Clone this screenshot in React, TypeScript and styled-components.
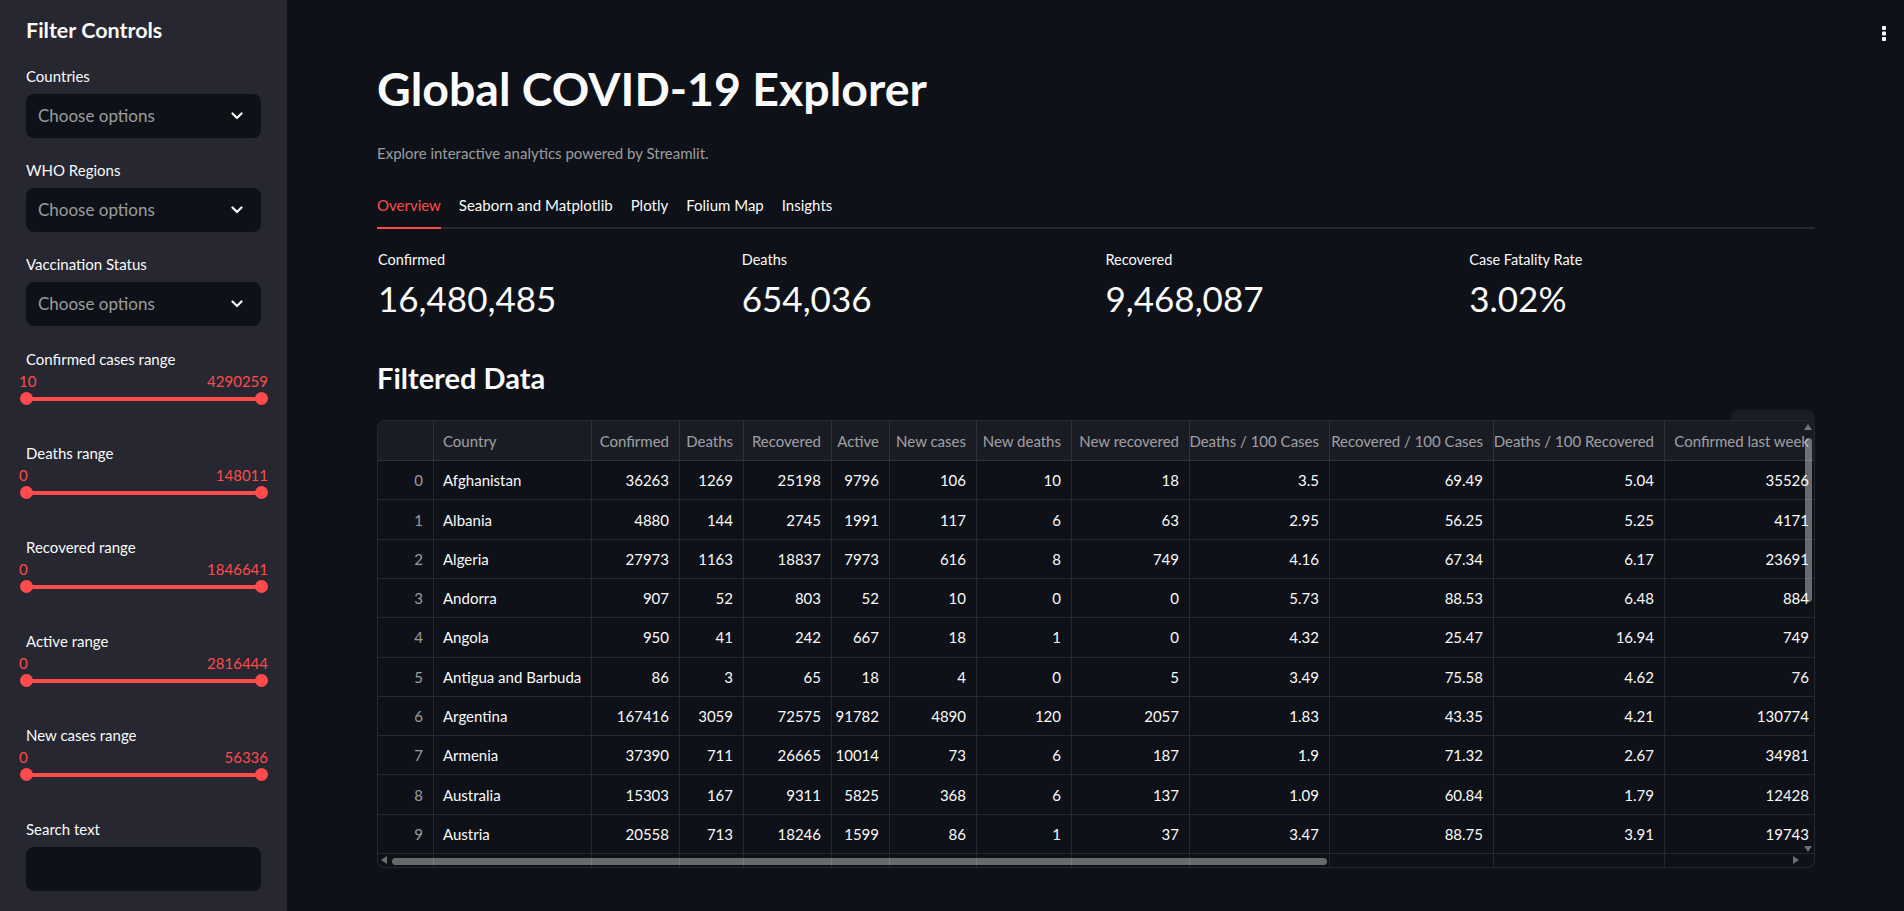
import React from "react";
import styled, { createGlobalStyle } from "styled-components";

const GlobalStyle = createGlobalStyle`
    html, body {
        margin: 0;
        padding: 0;
        background-color: #0e1117;
        color: #fafafa;
        font-family: Lato, "Noto Sans", sans-serif;
    }
    * {
        box-sizing: border-box;
    }
`;

const Page = styled.div`
    position: relative;
    display: flex;
    width: 100%;
    height: 100vh;
    overflow: hidden;
`;

/* ---------- sidebar ---------- */

const Sidebar = styled.aside`
    display: flex;
    flex: 0 0 287px;
    flex-direction: column;
    padding: 18px 26px 0 26px;
    background-color: #262730;
`;

const SidebarTitle = styled.h2`
    margin: 0 0 22px;
    font-size: 21.5px;
    font-weight: 700;
    line-height: 1.2;
`;

const Field = styled.div<{ $gap: number }>`
    display: flex;
    flex-direction: column;
    margin-bottom: ${(p) => p.$gap}px;
`;

const FieldLabel = styled.label`
    font-size: 15px;
    line-height: 20px;
    color: #fafafa;
`;

const Select = styled.div`
    display: flex;
    height: 44px;
    margin-top: 8px;
    padding: 0 18px 0 12px;
    align-items: center;
    justify-content: space-between;
    border-radius: 8px;
    background-color: #0e1117;
    font-size: 17px;
    color: rgba(250, 250, 250, 0.6);
`;

const TextInput = styled.div`
    height: 44px;
    margin-top: 8px;
    border-radius: 8px;
    background-color: #0e1117;
`;

const SliderBox = styled.div`
    margin: 4px -7px 0;
`;

const SliderValues = styled.div`
    display: flex;
    justify-content: space-between;
    font-size: 15px;
    line-height: 16px;
    color: #ff4b4b;
`;

const SliderTrack = styled.div`
    position: relative;
    height: 13px;
    margin: 3.5px 7px 0;
    &::before {
        content: "";
        position: absolute;
        left: 0;
        right: 0;
        top: 4.5px;
        height: 4px;
        border-radius: 2px;
        background-color: #ff4b4b;
    }
`;

const Thumb = styled.span<{ $side: "left" | "right" }>`
    position: absolute;
    top: 0;
    ${(p) => (p.$side === "left" ? "left: -6.5px;" : "right: -6.5px;")}
    width: 13px;
    height: 13px;
    border-radius: 50%;
    background-color: #ff4b4b;
`;

/* ---------- main ---------- */

const Main = styled.main`
    flex: 1;
    min-width: 0;
    padding: 61px 89px 0 90px;
`;

const Title = styled.h1`
    margin: 0;
    font-size: 46.5px;
    font-weight: 700;
    line-height: 1.2;
`;

const Caption = styled.p`
    margin: 26px 0 0;
    font-size: 15px;
    line-height: 20px;
    color: rgba(250, 250, 250, 0.6);
`;

const TabList = styled.div`
    display: flex;
    margin-top: 20px;
    gap: 18px;
    border-bottom: 2px solid #262730;
`;

const Tab = styled.div<{ $active?: boolean }>`
    position: relative;
    display: flex;
    height: 44px;
    align-items: center;
    font-size: 15px;
    color: ${(p) => (p.$active ? "#ff4b4b" : "#fafafa")};
    &::after {
        content: "";
        display: ${(p) => (p.$active ? "block" : "none")};
        position: absolute;
        left: 0;
        right: 0;
        bottom: -2px;
        height: 2px;
        background-color: #ff4b4b;
    }
`;

const Metrics = styled.div`
    display: grid;
    margin-top: 21.5px;
    padding-left: 1px;
    grid-template-columns: repeat(4, 1fr);
    gap: 18px;
`;

const MetricLabel = styled.div`
    font-size: 14.5px;
    line-height: 20px;
`;

const MetricValue = styled.div`
    margin-top: 7px;
    font-size: 35px;
    line-height: 1.2;
`;

const SectionTitle = styled.h3`
    margin: 42px 0 0;
    font-size: 29px;
    font-weight: 700;
    line-height: 1.2;
`;

const TableArea = styled.div`
    position: relative;
    margin-top: 24px;
`;

const ToolbarGhost = styled.div`
    position: absolute;
    top: -10px;
    right: 0;
    width: 84px;
    height: 30px;
    border-radius: 8px;
    background-color: #1a1c24;
`;

const TableFrame = styled.div`
    position: relative;
    height: 448px;
    overflow: hidden;
    border: 1px solid rgba(250, 250, 250, 0.1);
    border-radius: 8px;
    background-color: #0e1117;
`;

const COLS = "56px 158px 88px 64px 88px 58px 87px 95px 118px 140px 164px 171px 155px";

const Row = styled.div<{ $header?: boolean }>`
    display: grid;
    width: 1442px;
    height: ${(p) => (p.$header ? "40px" : "39.3px")};
    grid-template-columns: ${COLS};
    border-bottom: 1px solid rgba(250, 250, 250, 0.1);
    background-color: ${(p) => (p.$header ? "#1a1c24" : "transparent")};
`;

const Cell = styled.div<{ $align: "left" | "right"; $muted?: boolean }>`
    display: flex;
    padding: 0 10px 0 9px;
    align-items: center;
    justify-content: ${(p) => (p.$align === "left" ? "flex-start" : "flex-end")};
    overflow: hidden;
    border-right: 1px solid rgba(250, 250, 250, 0.1);
    white-space: nowrap;
    font-size: 15px;
    color: ${(p) => (p.$muted ? "rgba(250, 250, 250, 0.6)" : "#fafafa")};
`;

const VThumb = styled.div`
    position: absolute;
    top: 17px;
    right: 2px;
    width: 7px;
    height: 164px;
    border-radius: 4px;
    background-color: rgba(250, 250, 250, 0.38);
`;

const HThumb = styled.div`
    position: absolute;
    left: 14px;
    bottom: 2px;
    width: 935px;
    height: 7px;
    border-radius: 4px;
    background-color: rgba(250, 250, 250, 0.38);
`;

const Arrow = styled.svg<{ $pos: string }>`
    position: absolute;
    ${(p) => p.$pos}
    fill: rgba(250, 250, 250, 0.4);
`;

const MenuButton = styled.svg`
    position: absolute;
    top: 24px;
    right: 17px;
`;

const headers = [
    "",
    "Country",
    "Confirmed",
    "Deaths",
    "Recovered",
    "Active",
    "New cases",
    "New deaths",
    "New recovered",
    "Deaths / 100 Cases",
    "Recovered / 100 Cases",
    "Deaths / 100 Recovered",
    "Confirmed last week",
];

const rows: (string | number)[][] = [
    ["Afghanistan", 36263, 1269, 25198, 9796, 106, 10, 18, "3.5", "69.49", "5.04", 35526],
    ["Albania", 4880, 144, 2745, 1991, 117, 6, 63, "2.95", "56.25", "5.25", 4171],
    ["Algeria", 27973, 1163, 18837, 7973, 616, 8, 749, "4.16", "67.34", "6.17", 23691],
    ["Andorra", 907, 52, 803, 52, 10, 0, 0, "5.73", "88.53", "6.48", 884],
    ["Angola", 950, 41, 242, 667, 18, 1, 0, "4.32", "25.47", "16.94", 749],
    ["Antigua and Barbuda", 86, 3, 65, 18, 4, 0, 5, "3.49", "75.58", "4.62", 76],
    ["Argentina", 167416, 3059, 72575, 91782, 4890, 120, 2057, "1.83", "43.35", "4.21", 130774],
    ["Armenia", 37390, 711, 26665, 10014, 73, 6, 187, "1.9", "71.32", "2.67", 34981],
    ["Australia", 15303, 167, 9311, 5825, 368, 6, 137, "1.09", "60.84", "1.79", 12428],
    ["Austria", 20558, 713, 18246, 1599, 86, 1, 37, "3.47", "88.75", "3.91", 19743],
    ["Azerbaijan", 30446, 423, 23242, 6781, 396, 6, 558, "1.39", "76.34", "1.82", 27890],
];

const selects = ["Countries", "WHO Regions", "Vaccination Status"];

const ranges = [
    { label: "Confirmed cases range", min: 10, max: 4290259 },
    { label: "Deaths range", min: 0, max: 148011 },
    { label: "Recovered range", min: 0, max: 1846641 },
    { label: "Active range", min: 0, max: 2816444 },
    { label: "New cases range", min: 0, max: 56336 },
];

const tabs = ["Overview", "Seaborn and Matplotlib", "Plotly", "Folium Map", "Insights"];

const metrics = [
    { label: "Confirmed", value: "16,480,485" },
    { label: "Deaths", value: "654,036" },
    { label: "Recovered", value: "9,468,087" },
    { label: "Case Fatality Rate", value: "3.02%" },
];

const Chevron = () => (
    <svg width="12" height="8" viewBox="0 0 12 8">
        <polyline points="1.5,1.5 6,6 10.5,1.5" fill="none" stroke="#fafafa" strokeWidth="2.2" strokeLinecap="round" strokeLinejoin="round" />
    </svg>
);

export default function App() {
    return (
        <>
            <GlobalStyle />
            <Page>
                <Sidebar>
                    <SidebarTitle>Filter Controls</SidebarTitle>
                    {selects.map((s, i) => (
                        <Field key={s} $gap={i === selects.length - 1 ? 23 : 22}>
                            <FieldLabel>{s}</FieldLabel>
                            <Select>
                                <span>Choose options</span>
                                <Chevron />
                            </Select>
                        </Field>
                    ))}
                    {ranges.map((r) => (
                        <Field key={r.label} $gap={37.5}>
                            <FieldLabel>{r.label}</FieldLabel>
                            <SliderBox>
                                <SliderValues>
                                    <span>{r.min}</span>
                                    <span>{r.max}</span>
                                </SliderValues>
                                <SliderTrack>
                                    <Thumb $side="left" />
                                    <Thumb $side="right" />
                                </SliderTrack>
                            </SliderBox>
                        </Field>
                    ))}
                    <Field $gap={0}>
                        <FieldLabel>Search text</FieldLabel>
                        <TextInput />
                    </Field>
                </Sidebar>

                <Main>
                    <Title>Global COVID-19 Explorer</Title>
                    <Caption>Explore interactive analytics powered by Streamlit.</Caption>
                    <TabList>
                        {tabs.map((t, i) => (
                            <Tab key={t} $active={i === 0}>
                                {t}
                            </Tab>
                        ))}
                    </TabList>
                    <Metrics>
                        {metrics.map((m) => (
                            <div key={m.label}>
                                <MetricLabel>{m.label}</MetricLabel>
                                <MetricValue>{m.value}</MetricValue>
                            </div>
                        ))}
                    </Metrics>
                    <SectionTitle>Filtered Data</SectionTitle>
                    <TableArea>
                        <ToolbarGhost />
                        <TableFrame>
                            <Row $header>
                                {headers.map((h, i) => (
                                    <Cell key={i} $align={i === 1 ? "left" : "right"} $muted>
                                        {h}
                                    </Cell>
                                ))}
                            </Row>
                            {rows.map((r, idx) => (
                                <Row key={idx}>
                                    <Cell $align="right" $muted>
                                        {idx}
                                    </Cell>
                                    {r.map((v, i) => (
                                        <Cell key={i} $align={i === 0 ? "left" : "right"}>
                                            {v}
                                        </Cell>
                                    ))}
                                </Row>
                            ))}
                            <VThumb />
                            <HThumb />
                            <Arrow $pos="top: 3px; right: 2px;" width="8" height="6" viewBox="0 0 8 6">
                                <polygon points="4,0 8,6 0,6" />
                            </Arrow>
                            <Arrow $pos="bottom: 15px; right: 2px;" width="8" height="6" viewBox="0 0 8 6">
                                <polygon points="0,0 8,0 4,6" />
                            </Arrow>
                            <Arrow $pos="bottom: 3px; left: 3px;" width="6" height="8" viewBox="0 0 6 8">
                                <polygon points="6,0 6,8 0,4" />
                            </Arrow>
                            <Arrow $pos="bottom: 3px; right: 15px;" width="6" height="8" viewBox="0 0 6 8">
                                <polygon points="0,0 0,8 6,4" />
                            </Arrow>
                        </TableFrame>
                    </TableArea>
                </Main>

                <MenuButton width="6" height="18" viewBox="0 0 6 18">
                    <rect x="1" y="2" width="4" height="4" rx="1" fill="#fafafa" />
                    <rect x="1" y="7.5" width="4" height="4" rx="1" fill="#fafafa" />
                    <rect x="1" y="13" width="4" height="4" rx="1" fill="#fafafa" />
                </MenuButton>
            </Page>
        </>
    );
}
